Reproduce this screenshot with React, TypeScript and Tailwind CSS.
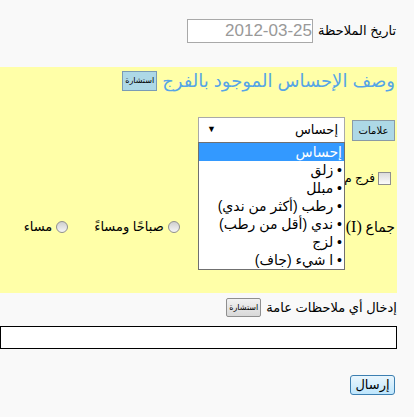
import React from 'react';

const options = ['• زلق', '• مبلل', '• رطب (أكثر من ندي)', '• ندي (أقل من رطب)', '• لزج', '• ا شيء (جاف)'];

export default function App() {
  const font = { fontFamily: '"Liberation Sans", "DejaVu Sans", sans-serif' };

  return (
    <div dir="rtl" style={font} className="w-[414px] h-[417px] overflow-hidden bg-[#f9f9f9] text-[13px] text-black">
      {/* date */}
      <div className="flex items-center gap-[5px] pt-[19px] pr-[18px]">
        <span className="text-[13px]">تاريخ الملاحظة</span>
        <div className="w-[126px] h-[24px] border border-[#a9a9a9] bg-white flex items-center justify-end pl-[4px] text-[17px] text-[#999]" dir="ltr">
          2012-03-25
        </div>
      </div>

      {/* panel */}
      <div className="mt-[24px] mr-[17px] h-[226px] bg-[#ffffa8] pr-[2px] pt-[2px]">
        <div className="flex items-center gap-[5px] h-[24px]">
          <span className="text-[18px] leading-[24px] text-[#56a5e6]">وصف الإحساس الموجود بالفرج</span>
          <button className="h-[20px] px-[2px] border border-[#7a9bb5] bg-[#add8e6] text-[8px] leading-[18px] whitespace-nowrap">استشارة</button>
        </div>

        <div className="flex items-center gap-[7px] mt-[24px]">
          <button className="w-[43px] h-[21px] border border-[#8a9aa5] bg-[#add8e6] text-[10px] leading-[19px]">علامات</button>
          <div className="relative w-[147px] h-[26px]">
            <div className="w-full h-full border border-[#a9a9a9] bg-white flex items-center justify-between pr-[6px] pl-[8px] text-[13px]">
              <span>إحساس</span>
              <span className="text-[9px]">▼</span>
            </div>
            <div className="absolute top-[25px] right-0 z-10 w-[147px] border border-[#707070] bg-white text-[14px]">
              <div className="h-[18px] leading-[18px] bg-[#3399ff] text-white pr-[2px]">إحساس</div>
              {options.map(o => (
                <div key={o} className="h-[18px] leading-[18px] pr-[2px]">{o}</div>
              ))}
            </div>
          </div>
        </div>

        <div className="flex items-center gap-[3px] mt-[26px] mr-[4px]">
          <span className="w-[13px] h-[13px] border border-[#8f8f8f] bg-gradient-to-b from-[#dcdcdc] to-[#fbfbfb]"></span>
          <span className="text-[12px]">فرج م</span>
        </div>

        <div className="flex items-center mt-[28px]">
          <span className="text-[14px]">جماع <span style={{ fontFamily: '"Liberation Serif", serif' }} className="text-[16px]">(I)</span></span>
          <div className="flex items-center gap-[4px] mr-[166px]">
            <span className="w-[12px] h-[12px] rounded-full border border-[#8f8f8f] bg-gradient-to-b from-[#cfcfcf] to-[#f6f6f6]"></span>
            <span>صباحًا ومساءً</span>
          </div>
          <div className="flex items-center gap-[4px] mr-[26px]">
            <span className="w-[12px] h-[12px] rounded-full border border-[#8f8f8f] bg-gradient-to-b from-[#cfcfcf] to-[#f6f6f6]"></span>
            <span>مساء</span>
          </div>
        </div>
      </div>

      {/* general notes */}
      <div className="flex items-center gap-[5px] mt-[5px] pr-[17px]">
        <span>إدخال أي ملاحظات عامة</span>
        <button className="h-[19px] px-[2px] border border-[#8f8f8f] rounded-[2px] bg-gradient-to-b from-[#f2f2f2] to-[#d8d8d8] text-[8px] leading-[17px] whitespace-nowrap">استشارة</button>
      </div>
      <div className="mt-[8px] mr-[17px] h-[23px] border border-black bg-white"></div>

      <div className="mt-[26px] mr-[19px] flex">
        <button className="w-[45px] h-[20px] border border-[#3c7fb1] rounded-[3px] bg-gradient-to-b from-[#eaf6fd] to-[#bee6fd] text-[13px] leading-[18px]">إرسال</button>
      </div>
    </div>
  );
}
